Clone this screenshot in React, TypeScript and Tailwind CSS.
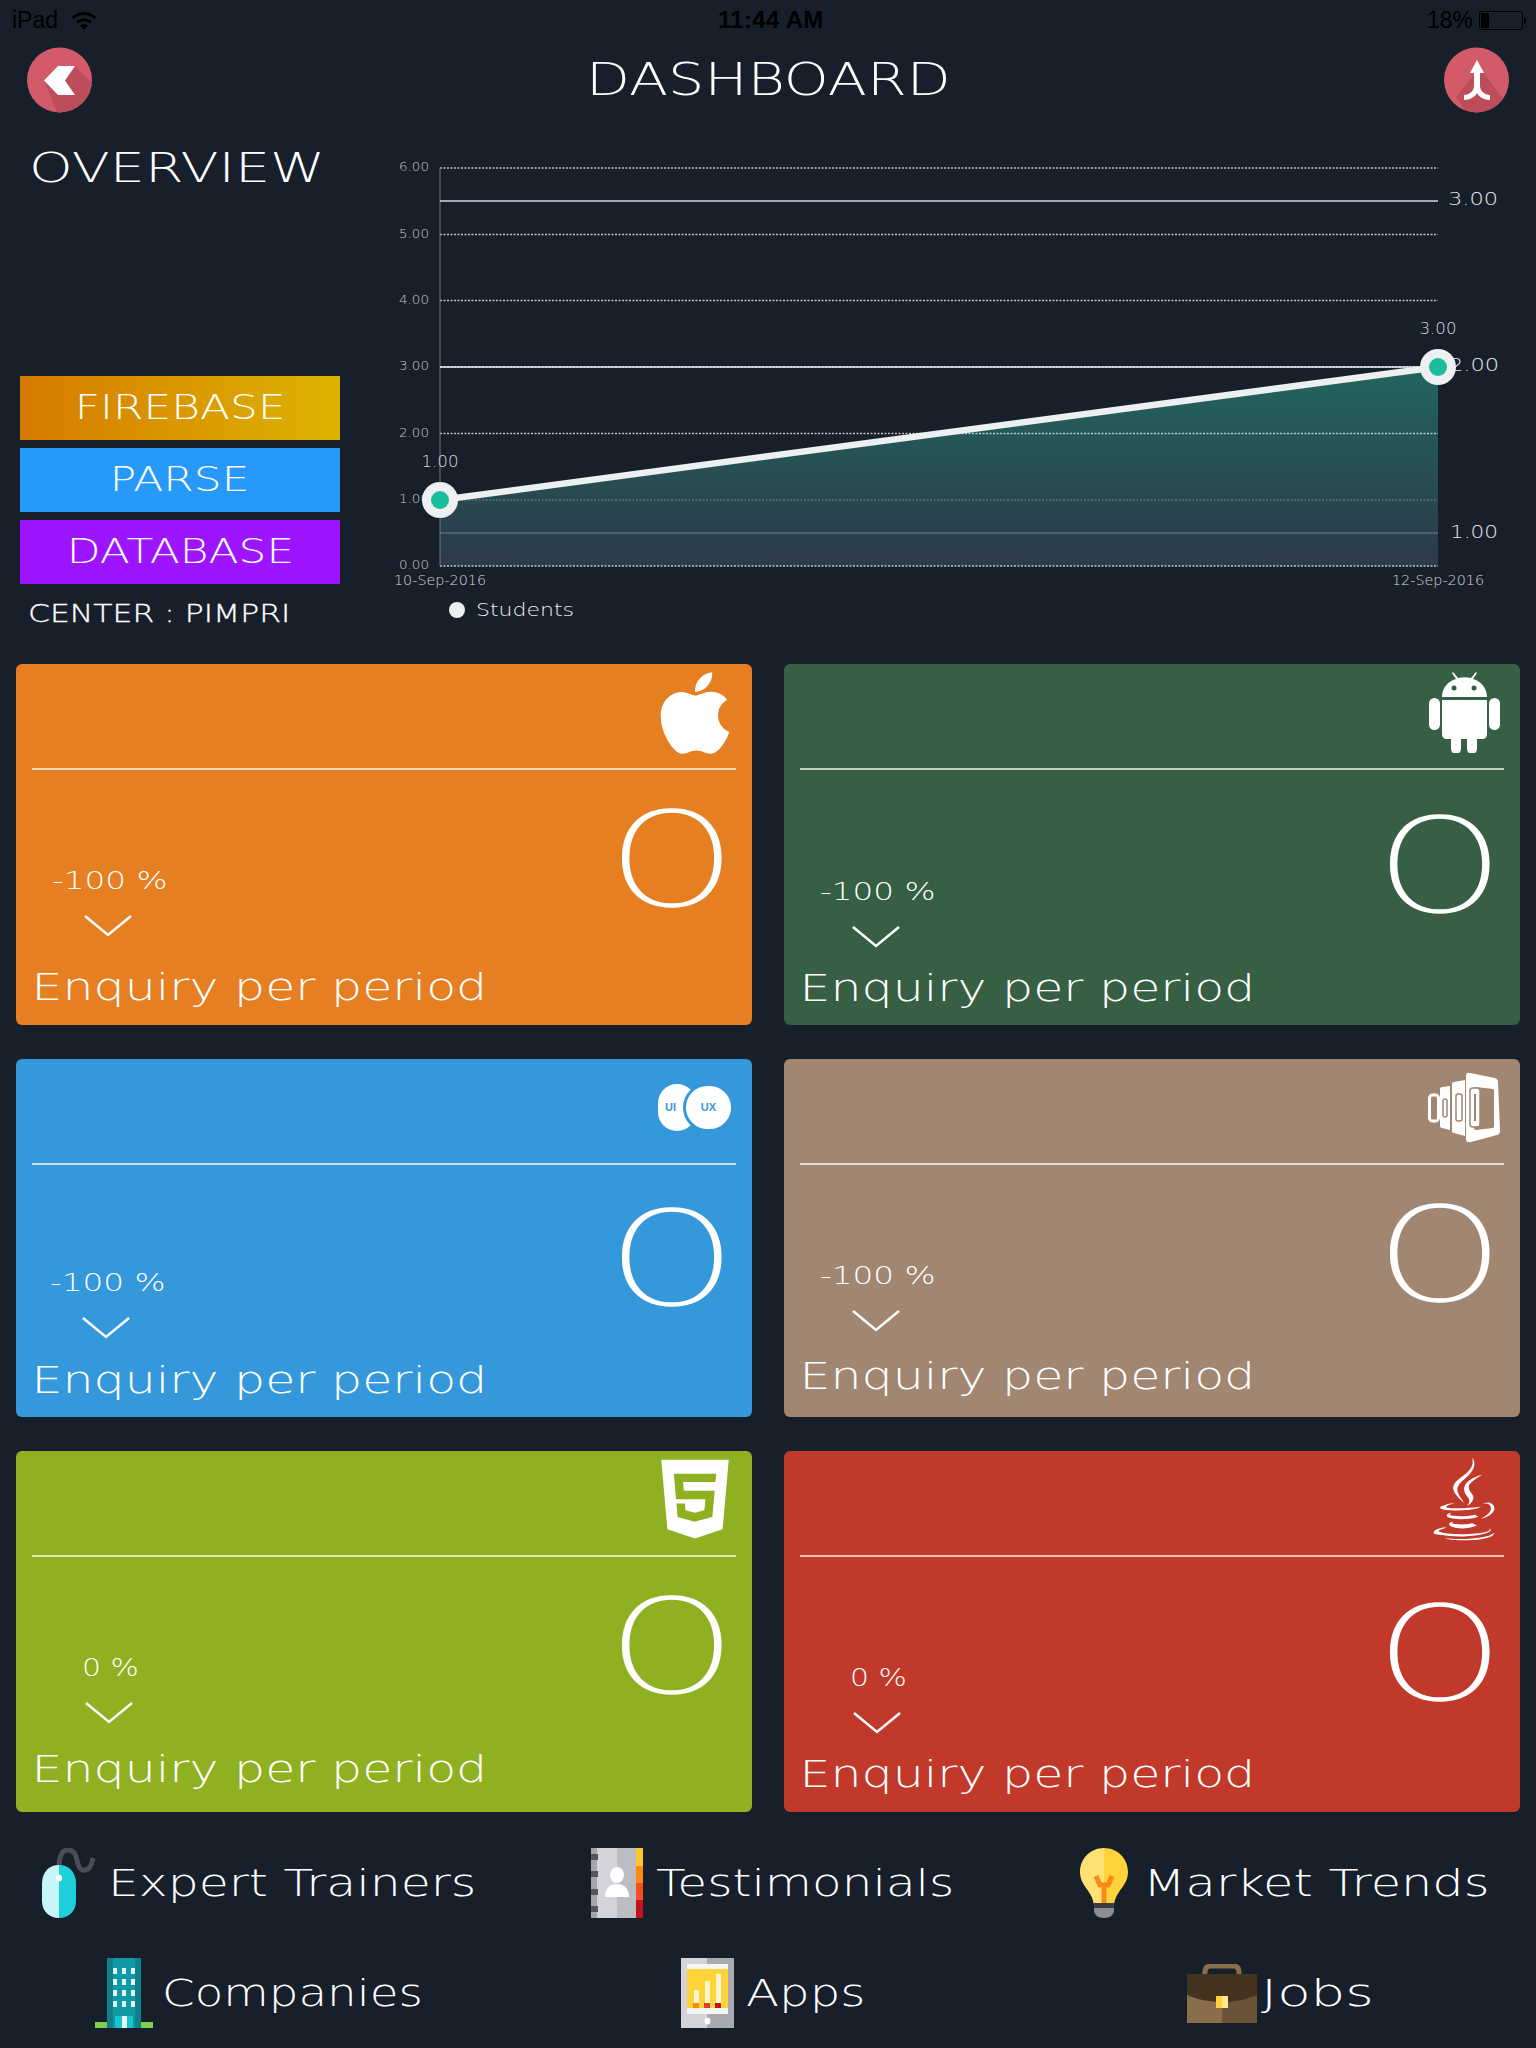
import React from 'react';
import { FaApple, FaHtml5, FaJava } from 'react-icons/fa';

const AndroidIcon = () => (
  <svg width="72" height="81" viewBox="0 0 72 81" fill="#fff">
    <path d="M14 25c0-9 6-16 14-18l-4-6 1-1 5 6c4-1 9-1 13 0l5-6 1 1-4 6c8 2 14 9 14 18z" />
    <circle cx="26" cy="16" r="2.5" fill="#365f44" />
    <circle cx="46" cy="16" r="2.5" fill="#365f44" />
    <path d="M14 28h45v34q0 5-5 5h-5v10a5 5 0 0 1-10 0V67h-6v10a5 5 0 0 1-10 0V67h-4q-5 0-5-5z" />
    <rect x="1" y="26" width="11" height="32" rx="5.5" />
    <rect x="61" y="26" width="11" height="32" rx="5.5" />
  </svg>
);

const UiUxIcon = () => (
  <div className="relative h-[47px] w-[76px]">
    <div className="absolute left-0 top-0 flex h-[47px] w-[38px] items-center rounded-full bg-white pl-[7px] font-['Liberation_Sans'] text-[11px] font-bold text-[#3498db]">UI</div>
    <div className="absolute right-0 top-[-1px] flex h-[49px] w-[51px] items-center justify-center rounded-full border-[3px] border-[#3498db] bg-white font-['Liberation_Sans'] text-[11px] font-bold text-[#3498db]">UX</div>
  </div>
);

const StackIcon = () => (
  <svg width="72" height="71" viewBox="0 0 72 71">
    <rect x="1.5" y="23" width="9" height="26" rx="3" fill="none" stroke="#fff" strokeWidth="3" />
    <path d="M12 17q0-2 2-2l8-1v44l-8-2q-2 0-2-2z" fill="#fff" />
    <rect x="15" y="27" width="4" height="18" rx="2" fill="none" stroke="#a18672" strokeWidth="1.5" />
    <path d="M24 12q0-2 2-2l11-2v56l-11-3q-2 0-2-2z" fill="#fff" />
    <rect x="28" y="22" width="6" height="27" rx="2" fill="none" stroke="#a18672" strokeWidth="1.5" />
    <path d="M38 4q0-4 4-3l25 5q3 1 3 4l2 49q0 3-3 4l-26 7q-5 1-5-3z" fill="#fff" />
    <path d="M46 17q0-2 2-2l17 2q1 0 1 2v35q0 2-1 2l-17 2q-2 0-2-2z" fill="#a18672" />
    <path d="M42 19q0-3 3-3h4q3 0 3 3v33q0 3-3 3h-4q-3 0-3-3z" fill="#fff" stroke="#a18672" strokeWidth="1.5" />
    <path d="M46 22h2v27h-2z" fill="#a18672" />
  </svg>
);

const MouseIcon = () => (
  <svg width="53" height="70" viewBox="0 0 53 70">
    <path d="M17 20c0-8 1-18 9-18s8 8 10 14 4 7 8 6 6-6 7-12" fill="none" stroke="#4a4d56" strokeWidth="5" />
    <path d="M17 17C7 17 0 24 0 36v17c0 10 7 17 17 17z" fill="#c6f6f8" />
    <path d="M17 17c10 0 17 7 17 19v17c0 10-7 17-17 17z" fill="#1dd0dc" />
    <ellipse cx="17" cy="30" rx="3" ry="3.5" fill="#fff" />
  </svg>
);

const BookIcon = () => (
  <svg width="52" height="70" viewBox="0 0 52 70">
    <rect x="0" y="0" width="26" height="70" fill="#d3d4d9" />
    <rect x="26" y="0" width="20" height="70" fill="#bcbdc3" />
    <rect x="0" y="0" width="6" height="70" fill="#a5a6ac" />
    <rect x="45" y="0" width="7" height="18" fill="#fdc92f" />
    <rect x="45" y="18" width="7" height="17" fill="#fb8a15" />
    <rect x="45" y="35" width="7" height="17" fill="#f0521f" />
    <rect x="45" y="52" width="7" height="18" fill="#c80f1e" />
    <rect x="0" y="6" width="7" height="6" fill="#55565d" />
    <rect x="0" y="23" width="7" height="6" fill="#55565d" />
    <rect x="0" y="41" width="7" height="6" fill="#55565d" />
    <rect x="0" y="58" width="7" height="6" fill="#55565d" />
    <ellipse cx="26" cy="27" rx="7" ry="8" fill="#fff" />
    <path d="M14 49c0-9 5-13 12-13s12 4 12 13z" fill="#fff" />
  </svg>
);

const BulbIcon = () => (
  <svg width="48" height="70" viewBox="0 0 48 70">
    <path d="M24 0C10 0 0 11 0 24c0 14 12 18 14 33h10z" fill="#ffe073" />
    <path d="M24 0c14 0 24 11 24 24 0 14-12 18-14 33H24z" fill="#ffd33a" />
    <path d="M16 28l4 9h8l4-9M24 37v18" fill="none" stroke="#f98a13" strokeWidth="5" />
    <rect x="14" y="55" width="20" height="5" fill="#3a3c43" />
    <path d="M14 60h20v2c0 5-4 8-10 8s-10-3-10-8z" fill="#8d8e95" />
  </svg>
);

const BuildingIcon = () => (
  <svg width="58" height="70" viewBox="0 0 58 70">
    <rect x="12" y="0" width="34" height="70" fill="#0f7f89" />
    <rect x="18" y="0" width="22" height="70" fill="#119aa5" />
    <rect x="0" y="64" width="12" height="6" fill="#7ed04f" />
    <rect x="46" y="64" width="12" height="6" fill="#7ed04f" />
    {[10, 21, 32, 43].map((y) => (
      <g key={y} fill="#dff7f8">
        <rect x="18" y={y} width="4" height="6" />
        <rect x="27" y={y} width="4" height="6" />
        <rect x="36" y={y} width="4" height="6" />
      </g>
    ))}
    <rect x="20" y="58" width="18" height="12" fill="#19c3cf" />
    <rect x="27" y="58" width="5" height="12" fill="#e6fbfc" />
  </svg>
);

const PhoneIcon = () => (
  <svg width="53" height="70" viewBox="0 0 53 70">
    <rect x="0" y="0" width="26" height="70" fill="#d3d4d9" />
    <rect x="26" y="0" width="27" height="70" fill="#a9aab0" />
    <rect x="6" y="6" width="41" height="50" fill="#f4f4f2" />
    <rect x="6" y="11" width="41" height="39" fill="#ffd33a" />
    <rect x="13" y="32" width="5" height="16" fill="#fff6d0" />
    <rect x="24" y="23" width="5" height="25" fill="#fff6d0" />
    <rect x="35" y="16" width="5" height="32" fill="#fff6d0" />
    <rect x="12" y="45" width="6" height="5" fill="#f98a13" />
    <rect x="23" y="45" width="6" height="5" fill="#e0431b" />
    <rect x="34" y="45" width="6" height="5" fill="#c80f1e" />
    <ellipse cx="26.5" cy="63" rx="3" ry="3.5" fill="#fff" />
  </svg>
);

const CaseIcon = () => (
  <svg width="70" height="59" viewBox="0 0 70 59">
    <path d="M18 11V8q0-6 6-6h22q6 0 6 6v3" fill="none" stroke="#8a6d4b" strokeWidth="5" />
    <rect x="0" y="10" width="70" height="49" fill="#6b5337" />
    <path d="M0 10h35v49H0z" fill="#8a6d4b" />
    <path d="M0 10h70v21c-12 5-24 7-35 7S12 36 0 31z" fill="#43331f" />
    <rect x="29" y="32" width="12" height="12" fill="#ffd33a" />
    <rect x="35" y="32" width="6" height="12" fill="#ffe98f" />
  </svg>
);

const cards = [
  { color: 'bg-[#e67e22]', h: 'h-[361px]', head: 'h-[104px] pr-[22px] pb-[6px]', icon: <FaApple className="h-[96px] w-[70px] text-white" />, pct: '-100 %', left: 'pt-[96px] pl-[36px]', zero: 'pt-[23px]', label: 'pb-[19px]' },
  { color: 'bg-[#365f44]', h: 'h-[361px]', head: 'h-[104px] pr-[20px] pb-[8px]', icon: <AndroidIcon />, pct: '-100 %', left: 'pt-[107px] pl-[36px]', zero: 'pt-[29px]', label: 'pb-[18px]' },
  { color: 'bg-[#3498db]', h: 'h-[358px]', head: 'h-[104px] pr-[18px] pb-[8px]', icon: <UiUxIcon />, pct: '-100 %', left: 'pt-[103px] pl-[34px]', zero: 'pt-[27px]', label: 'pb-[18px]' },
  { color: 'bg-[#a18672]', h: 'h-[358px]', head: 'h-[104px] pr-[20px] pb-[8px]', icon: <StackIcon />, pct: '-100 %', left: 'pt-[96px] pl-[36px]', zero: 'pt-[23px]', label: 'pb-[22px]' },
  { color: 'bg-[#8fb020]', h: 'h-[361px]', head: 'h-[104px] pr-[17px] pb-[8px]', icon: <FaHtml5 className="h-[90px] w-[80px] text-white" />, pct: '0 %', left: 'pt-[96px] pl-[66px]', zero: 'pt-[23px]', label: 'pb-[24px]' },
  { color: 'bg-[#c0392b]', h: 'h-[361px]', head: 'h-[104px] pr-[25px] pb-[8px]', icon: <FaJava className="h-[84px] w-[62px] text-white" />, pct: '0 %', left: 'pt-[106px] pl-[66px]', zero: 'pt-[30px]', label: 'pb-[19px]' },
];

const links = [
  { icon: <MouseIcon />, text: 'Expert Trainers', box: 'gap-[13px]', tw: 'w-[363px] scale-x-[1.285]' },
  { icon: <BookIcon />, text: 'Testimonials', box: 'gap-[13px] pl-[6px]', tw: 'w-[296px] scale-x-[1.275]' },
  { icon: <BulbIcon />, text: 'Market Trends', box: 'gap-[15px] pl-[2px]', tw: 'w-[340px] scale-x-[1.3]' },
  { icon: <BuildingIcon />, text: 'Companies', box: 'gap-[9px] pl-[4px]', tw: 'w-[259px] scale-x-[1.23]' },
  { icon: <PhoneIcon />, text: 'Apps', box: 'gap-[12px] pl-[8px]', tw: 'w-[118px] scale-x-[1.27]' },
  { icon: <CaseIcon />, text: 'Jobs', box: 'gap-[4px] pr-[4px]', tw: 'w-[109px] scale-x-[1.44]' },
];

const gridY = [
  { y: 168, label: '6.00' },
  { y: 234.5, label: '5.00' },
  { y: 300.5, label: '4.00' },
  { y: 367, label: '3.00' },
  { y: 433.5, label: '2.00' },
  { y: 500, label: '1.00' },
  { y: 566, label: '0.00' },
];

const Chart = () => (
  <svg width="1156" height="480" viewBox="380 150 1156 480" className="block shrink-0">
    <defs>
      <linearGradient id="area" x1="0" y1="0" x2="0" y2="1">
        <stop offset="0" stopColor="#22655f" />
        <stop offset="1" stopColor="#2c3a49" />
      </linearGradient>
    </defs>
    <path d="M440 500L1438 367V566H440z" fill="url(#area)" />
    {gridY.map((g) => (
      <g key={g.y}>
        <line x1="440" x2="1438" y1={g.y} y2={g.y} stroke="#e8ecef" strokeWidth="1.5" strokeDasharray="2 1.5" opacity={g.y === 500 ? 0.25 : 0.8} />
        <text x="429" y={g.y + 3} textAnchor="end" fontSize="13" textLength="30" lengthAdjust="spacingAndGlyphs" fill="#c4c9ce">{g.label}</text>
      </g>
    ))}
    <line x1="440" x2="440" y1="168" y2="566" stroke="#6f7780" />
    <line x1="440" x2="1438" y1="201" y2="201" stroke="#d4d8db" strokeWidth="1.5" />
    <line x1="440" x2="1438" y1="367" y2="367" stroke="#e8ecef" strokeWidth="1.5" />
    <line x1="440" x2="1438" y1="533" y2="533" stroke="#e8ecef" strokeWidth="1" opacity="0.35" />
    <text x="1448" y="205" fontSize="18" textLength="50" lengthAdjust="spacingAndGlyphs" fill="#e4e7ea">3.00</text>
    <text x="1449" y="371" fontSize="18" textLength="50" lengthAdjust="spacingAndGlyphs" fill="#e4e7ea">2.00</text>
    <text x="1450" y="538" fontSize="18" textLength="48" lengthAdjust="spacingAndGlyphs" fill="#e4e7ea">1.00</text>
    <text x="440" y="467" textAnchor="middle" fontSize="15" textLength="37" lengthAdjust="spacingAndGlyphs" fill="#d4d8db">1.00</text>
    <text x="1438" y="334" textAnchor="middle" fontSize="15" textLength="37" lengthAdjust="spacingAndGlyphs" fill="#d4d8db">3.00</text>
    <line x1="440" y1="500" x2="1438" y2="367" stroke="#ecf0f1" strokeWidth="6.5" />
    <circle cx="440" cy="500" r="18" fill="#ecf0f1" />
    <circle cx="440" cy="500" r="9" fill="#1abc9c" />
    <circle cx="1438" cy="367" r="18" fill="#ecf0f1" />
    <circle cx="1438" cy="367" r="9" fill="#1abc9c" />
    <text x="440" y="585" textAnchor="middle" fontSize="13.5" textLength="92" lengthAdjust="spacingAndGlyphs" fill="#d4d8db">10-Sep-2016</text>
    <text x="1438" y="585" textAnchor="middle" fontSize="13.5" textLength="92" lengthAdjust="spacingAndGlyphs" fill="#d4d8db">12-Sep-2016</text>
    <circle cx="457" cy="610" r="8" fill="#ecf0f1" />
    <text x="476" y="616" fontSize="18" textLength="98" lengthAdjust="spacingAndGlyphs" fill="#eceff1">Students</text>
  </svg>
);

export default function App() {
  return (
    <div className="h-[2048px] w-[1536px] overflow-hidden bg-[#161f2a] font-['DejaVu_Sans',sans-serif] font-extralight text-white">
      <div className="relative flex h-[40px] items-center justify-between pl-[12px] pr-[10px] font-['Liberation_Sans',sans-serif] text-[23px] font-normal text-black">
        <div className="flex items-center gap-[13px]">
          <span>iPad</span>
          <svg width="26" height="19" viewBox="0 0 26 19" fill="none" stroke="#000" strokeWidth="3">
            <path d="M1.5 7Q13-2 24.5 7" />
            <path d="M6 11.5Q13 6 20 11.5" />
            <path d="M13 18.5L9.5 14.500Q13 12.500 16.500 14.500z" fill="#000" strokeWidth="1" />
          </svg>
        </div>
        <span className="absolute left-[718px] text-[24px] font-bold tracking-[0.3px]">11:44 AM</span>
        <div className="flex items-center gap-[6px]">
          <span>18%</span>
          <div className="h-[19px] w-[44px] rounded-[3px] border border-black p-[1px]"><div className="h-full w-[8px] bg-black" /></div>
          <div className="ml-[-5px] h-[7px] w-[2px] rounded-r-sm bg-black" />
        </div>
      </div>

      <div className="flex items-center justify-between px-[27px] pt-[7px]">
        <svg width="65" height="66" viewBox="0 0 65 66">
          <clipPath id="backClip"><circle cx="32.5" cy="33" r="32.500" /></clipPath>
          <circle cx="32.5" cy="33" r="32.5" fill="#d35a68" />
          <path d="M48 19l17 17v30H30L17 33z" fill="#bd4d5b" clipPath="url(#backClip)" />
          <path d="M31 19h17l-10 14.500L48 48H31L17 33.500z" fill="#fff" />
        </svg>
        <h1 className="scale-x-[1.3] text-[44px] leading-none font-extralight">DASHBOARD</h1>
        <svg width="65" height="66" viewBox="0 0 65 66">
          <clipPath id="upClip"><circle cx="32.5" cy="33" r="32.500" /></clipPath>
          <circle cx="32.5" cy="33" r="32.5" fill="#d35a68" />
          <path d="M36 20L70 68H24L12 50z" fill="#bd4d5b" clipPath="url(#upClip)" />
          <path d="M33 13l7 13h-4v13c0 6 6 9 10 9v5c-6 0-11-3-13-7-2 4-7 7-13 7v-5c4 0 10-3 10-9V26h-4z" fill="#fff" />
        </svg>
      </div>

      <section className="mb-[34px] mt-[37px] flex h-[480px]">
        <div className="flex w-[380px] flex-col pl-[20px]">
          <h2 className="ml-[9px] mt-[-2px] origin-left scale-x-[1.39] text-[40px] leading-none font-extralight">OVERVIEW</h2>
          <div className="mt-auto flex w-[320px] flex-col gap-2">
            <div className="flex h-[64px] items-center justify-center bg-gradient-to-r from-[#d67a00] to-[#dcb400] text-[33px]"><span className="scale-x-[1.33]">FIREBASE</span></div>
            <div className="flex h-[64px] items-center justify-center bg-[#2699fb] text-[33px]"><span className="scale-x-[1.33]">PARSE</span></div>
            <div className="flex h-[64px] items-center justify-center bg-[#9d14ff] text-[33px]"><span className="scale-x-[1.33]">DATABASE</span></div>
          </div>
          <div className="mb-[4px] ml-[8px] mt-[18px] origin-left scale-x-[1.31] text-[24px] leading-none [-webkit-text-stroke:0.3px_white]">CENTER : PIMPRI</div>
        </div>
        <Chart />
      </section>

      <div className="grid grid-cols-2 gap-x-8 gap-y-[34px] px-4">
        {cards.map((c, i) => (
          <div key={i} className={`flex flex-col rounded-md ${c.color} ${c.h}`}>
            <div className={`flex items-center justify-end ${c.head}`}>{c.icon}</div>
            <div className="mx-4 h-[2px] bg-white/70" />
            <div className="flex flex-1 flex-col">
              <div className="flex justify-between pr-[42px]">
                <div className={`flex flex-col ${c.left}`}>
                  <span className={`text-[24px] leading-[30px] ${c.pct === '0 %' ? 'origin-left scale-x-[1.24]' : 'origin-left scale-x-[1.36]'}`}>{c.pct}</span>
                  <svg width="48" height="22" viewBox="0 0 48 22" className={c.pct === '0 %' ? 'ml-[3px] mt-[19px]' : 'ml-[32px] mt-[19px]'}>
                    <path d="M1 1l23 19L47 1" fill="none" stroke="#fff" strokeWidth="2.500" />
                  </svg>
                </div>
                <span className={`scale-x-[1.66] font-['Inter'] text-[131px] leading-none font-thin [-webkit-text-stroke:1.5px_white] ${c.zero}`}>0</span>
              </div>
              <div className={`mt-auto origin-left scale-x-[1.29] pl-[12px] text-[38px] leading-none ${c.label}`}>Enquiry per period</div>
            </div>
          </div>
        ))}
      </div>

      <div className="mt-[36px] grid grid-cols-3 gap-y-[40px]">
        {links.map((l) => (
          <div key={l.text} className={`flex h-[70px] items-center justify-center text-[38px] ${l.box}`}>
            {l.icon}
            <span className={`origin-left whitespace-nowrap ${l.tw}`}>{l.text}</span>
          </div>
        ))}
      </div>
    </div>
  );
}
